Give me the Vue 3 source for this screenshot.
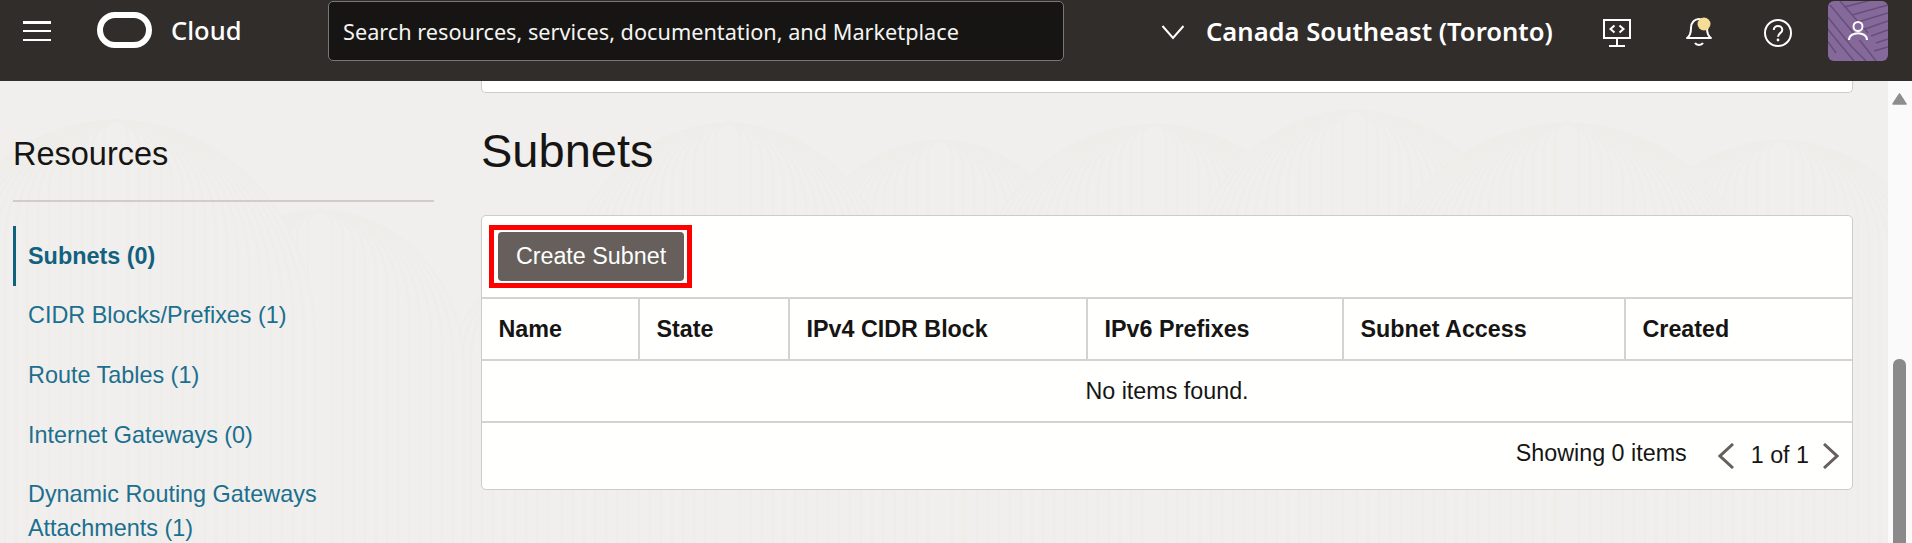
<script setup>
const columns = [
  { name: 'Name', width: 158 },
  { name: 'State', width: 150 },
  { name: 'IPv4 CIDR Block', width: 298 },
  { name: 'IPv6 Prefixes', width: 256 },
  { name: 'Subnet Access', width: 282 },
  { name: 'Created', width: 226 }
]
const links = [
  { label: 'Subnets (0)', active: true },
  { label: 'CIDR Blocks/Prefixes (1)' },
  { label: 'Route Tables (1)' },
  { label: 'Internet Gateways (0)' },
  { label: 'Dynamic Routing Gateways Attachments (1)' }
]
const apexes = [
  [420, 330, 130], [560, 180, 120], [320, 130, 150], [116, 40, 200], [940, 60, 150],
  [728, 43, 170], [1154, 44, 190], [1780, 60, 170], [1355, 30, 170], [1567, 43, 210]
]
const arches = []
for (const [cx, cy, max] of apexes) {
  for (let r = max - ((max - 12) % 11); r >= 12; r -= 11) {
    arches.push(`M${cx - r} 470 V${cy + r * 1.1} A${r} ${r * 1.1} 0 0 1 ${cx + r} ${cy + r * 1.1} V470`)
  }
}
</script>

<template>
  <div class="page">
    <header class="topbar">
      <button class="menu" aria-label="Menu"><span></span><span></span><span></span></button>
      <svg class="logo" viewBox="0 0 55 36" width="55" height="36" aria-hidden="true">
        <rect x="3" y="3" width="49" height="30" rx="15" fill="none" stroke="#fff" stroke-width="6" />
      </svg>
      <span class="brand">Cloud</span>
      <div class="search">Search resources, services, documentation, and Marketplace</div>
      <div class="region">
        <svg viewBox="0 0 24 16" width="24" height="16" aria-hidden="true">
          <path d="M1.5 2 L12 14 L22.500 2" fill="none" stroke="#fff" stroke-width="2" />
        </svg>
        <span>Canada Southeast (Toronto)</span>
      </div>
      <svg class="icon code" viewBox="0 0 28 28" width="28" height="28" aria-hidden="true">
        <rect x="1" y="1" width="26" height="18" fill="none" stroke="#fff" stroke-width="2" />
        <path d="M14 19 V26 M6 27 H22" fill="none" stroke="#fff" stroke-width="2" />
        <path d="M11.500 6.500 L7.500 10 L11.500 13.500 M16.500 6.500 L20.500 10 L16.500 13.500" fill="none" stroke="#fff" stroke-width="2" />
      </svg>
      <svg class="icon bell" viewBox="0 0 28 30" width="28" height="30" aria-hidden="true">
        <path d="M2 21 C5 19 6 16 6 11 C6 5 10 2 14 2 C18 2 22 5 22 11 C22 16 23 19 26 21 Z" fill="none" stroke="#fff" stroke-width="2" stroke-linejoin="round" />
        <path d="M10 26 C11.500 28.500 16.500 28.500 18 26" fill="none" stroke="#fff" stroke-width="2" />
        <circle cx="19" cy="7" r="6.500" fill="#f6dc96" />
      </svg>
      <svg class="icon help" viewBox="0 0 28 28" width="28" height="28" aria-hidden="true">
        <circle cx="14" cy="14" r="13" fill="none" stroke="#fff" stroke-width="2" />
        <path d="M9.800 11 C9.800 5.800 18.300 5.800 18.300 11 C18.300 14 14 14.300 14 17.800" fill="none" stroke="#fff" stroke-width="2" />
        <circle cx="14" cy="21" r="1.400" fill="#fff" />
      </svg>
      <div class="avatar">
        <svg viewBox="0 0 60 60" width="60" height="60" aria-hidden="true">
          <g fill="none" stroke="#65507a" stroke-width="1.500">
            <path d="M2 4 L34 42 M-2 14 L24 46 M-2 26 L16 48 M12 0 L40 32 M26 -2 L60 -14 M16 6 L60 -5 M24 14 L60 4 M30 21 L60 12 M37 28 L60 20 M43 35 L60 29 M48 42 L60 38 M-2 38 L8 52 M34 42 L48 60 M24 46 L38 60 M16 48 L26 60 M46 50 L60 46" />
          </g>
          <circle cx="30" cy="25.500" r="4.500" fill="#85699a" stroke="#fff" stroke-width="2" />
          <path d="M21 39 C21 30 39 30 39 39" fill="#85699a" stroke="#fff" stroke-width="2" />
        </svg>
      </div>
    </header>

    <div class="workspace">
      <svg class="texture" width="1912" height="462" aria-hidden="true">
        <path v-for="(d, i) in arches" :key="i" :d="d" />
      </svg>

      <aside class="sidebar">
        <h2>Resources</h2>
        <nav>
          <a v-for="link in links" :key="link.label" :class="{ active: link.active }">{{ link.label }}</a>
        </nav>
      </aside>

      <main class="content">
        <div class="stub"></div>
        <h1>Subnets</h1>
        <section class="card">
          <div class="toolbar">
            <div class="highlight"><button class="create">Create Subnet</button></div>
          </div>
          <div class="row head">
            <div v-for="col in columns" :key="col.name" class="cell" :style="{ width: col.width + 'px' }">{{ col.name }}</div>
          </div>
          <div class="empty">No items found.</div>
          <div class="pager">
            <span class="count">Showing 0 items</span>
            <svg viewBox="0 0 16 26" width="16" height="26" aria-hidden="true">
              <path d="M15 1 L2 13 L15 25" fill="none" stroke="#665f5b" stroke-width="3" />
            </svg>
            <span class="pages">1 of 1</span>
            <svg viewBox="0 0 16 26" width="16" height="26" aria-hidden="true">
              <path d="M1 1 L14 13 L1 25" fill="none" stroke="#665f5b" stroke-width="3" />
            </svg>
          </div>
        </section>
      </main>

      <div class="scrollbar">
        <svg class="arrow" viewBox="0 0 15 12" width="15" height="12" aria-hidden="true">
          <path d="M7.500 1 L14 11 H1 Z" fill="#8d8d8d" stroke="#8d8d8d" stroke-width="1.500" stroke-linejoin="round" />
        </svg>
        <div class="thumb"></div>
      </div>
    </div>
  </div>
</template>

<style>
html, body { margin: 0; padding: 0; background: #f1efed; overflow: hidden; }
</style>

<style scoped>
.page {
  width: 1912px;
  height: 543px;
  overflow: hidden;
  display: flex;
  flex-direction: column;
  font-family: "Liberation Sans", Arial, sans-serif;
  color: #161513;
}
.topbar {
  height: 81px;
  flex: none;
  background: #312d2a;
  display: flex;
  align-items: flex-start;
  color: #fff;
  font-family: "Noto Sans", sans-serif;
  box-sizing: border-box;
}
.menu {
  width: 28px;
  height: 20px;
  margin: 21px 0 0 23px;
  padding: 0;
  border: 0;
  background: none;
  display: flex;
  flex-direction: column;
  justify-content: space-between;
  flex: none;
}
.menu span { display: block; height: 2.500px; background: #fff; }
.logo { margin: 12px 0 0 46px; flex: none; }
.brand { margin: 11px 0 0 19px; font-size: 25.500px; line-height: 38px; font-weight: 500; width: 157px; flex: none; }
.search {
  width: 736px;
  height: 60px;
  margin-top: 1px;
  box-sizing: border-box;
  border: 1px solid #7b7774;
  border-radius: 5px;
  background: #161513;
  padding-left: 14px;
  font-size: 21.700px;
  line-height: 60px;
  color: #f5f4f2;
  flex: none;
}
.region {
  margin: 16px 0 0 97px;
  width: 442px;
  display: flex;
  align-items: center;
  gap: 21px;
  font-size: 25.600px;
  line-height: 32px;
  font-weight: 600;
  flex: none;
}
.icon { flex: none; }
.code { margin: 19px 0 0 0; }
.bell { margin: 17px 0 0 54px; }
.help { margin: 19px 0 0 51px; }
.avatar {
  width: 60px;
  height: 60px;
  margin: 1px 0 0 36px;
  border-radius: 6px;
  background: #85699a;
  overflow: hidden;
  flex: none;
}
.workspace {
  position: relative;
  flex: 1;
  display: flex;
  min-height: 0;
  background: #f1efed;
}
.texture { position: absolute; left: 0; top: 0; }
.texture path { fill: #f1efed; stroke: #eeedea; stroke-width: 2.500; }
.sidebar {
  position: relative;
  width: 481px;
  flex: none;
  box-sizing: border-box;
  padding: 50px 0 0 13px;
}
.sidebar h2 {
  margin: 0;
  width: 421px;
  height: 71px;
  box-sizing: border-box;
  border-bottom: 2px solid #d0cdc8;
  font-size: 32.500px;
  line-height: 46px;
  font-weight: 400;
}
nav { margin-top: 23px; display: flex; flex-direction: column; width: 340px; }
nav a {
  padding: 12.800px 0 12.800px 15px;
  line-height: 34px;
  font-size: 23.400px;
  color: #1b6f8f;
}
nav a.active {
  font-weight: 700;
  color: #12617f;
  border-left: 3px solid #12617f;
  padding-left: 12px;
  margin-top: 1px;
}
.content { position: relative; width: 1372px; flex: none; }
.stub {
  height: 12px;
  box-sizing: border-box;
  background: #fff;
  border: 1px solid #cfcbc7;
  border-top: 0;
  border-radius: 0 0 5px 5px;
}
h1 {
  margin: 0;
  height: 122px;
  font-size: 47px;
  font-weight: 400;
  line-height: 116px;
}
.card {
  height: 275px;
  box-sizing: border-box;
  background: #fffffe;
  border: 1px solid #cfcbc7;
  border-radius: 5px;
  display: flex;
  flex-direction: column;
}
.toolbar { height: 81px; box-sizing: border-box; padding: 9px 0 0 7px; flex: none; }
.highlight {
  width: 203px;
  height: 63px;
  box-sizing: border-box;
  border: 5px solid #f00;
  padding: 2px 3px 2px 4px;
}
.create {
  display: block;
  width: 186px;
  height: 49px;
  padding: 0;
  border: 0;
  border-radius: 4px;
  background: #665f5b;
  color: #fff;
  font: 400 23.300px "Liberation Sans", Arial, sans-serif;
}
.row { display: flex; flex: none; }
.head {
  height: 64px;
  box-sizing: border-box;
  border-top: 2px solid #d6d2ce;
  border-bottom: 2px solid #d6d2ce;
}
.cell {
  box-sizing: border-box;
  padding-left: 16.500px;
  border-right: 2px solid #d6d2ce;
  font-weight: 700;
  font-size: 23.300px;
  line-height: 60px;
}
.cell:last-child { border-right: 0; }
.empty {
  height: 62px;
  flex: none;
  box-sizing: border-box;
  border-bottom: 2px solid #d6d2ce;
  text-align: center;
  font-size: 23.300px;
  line-height: 60px;
}
.pager {
  flex: 1;
  display: flex;
  align-items: center;
  justify-content: flex-end;
  padding: 0 13px 0 0;
  font-size: 23.300px;
}
.count { margin: 0 31px 6px 0; }
.pages { margin: 0 14px 2px 17px; }
.scrollbar { position: relative; margin-left: 35px; width: 24px; flex: none; background: #fafafa; }
.arrow { display: block; margin: 12px 0 0 4px; }
.thumb { width: 13px; height: 200px; margin: 254px 0 0 5px; background: #8a8a8a; border-radius: 6px 6px 0 0; }
</style>
